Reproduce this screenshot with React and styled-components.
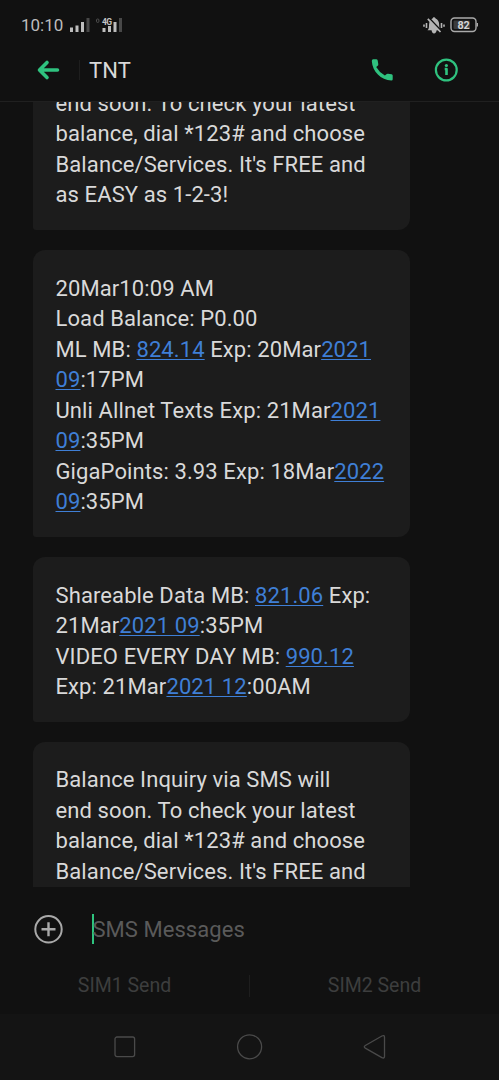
import React from "react";
import styled, { createGlobalStyle } from "styled-components";

const GlobalStyle = createGlobalStyle`
  * { box-sizing: border-box; }
  body { margin: 0; background: #111111; overflow: hidden; }
`;

const Screen = styled.main`
  display: flex;
  flex-direction: column;
  width: 499px;
  height: 1080px;
  overflow: hidden;
  background: #111111;
  color: #d9d9d9;
  font-family: Roboto, "Liberation Sans", sans-serif;
`;

const StatusBar = styled.div`
  display: flex;
  align-items: center;
  height: 50px;
  padding: 0 20px 0 21px;
`;

const Clock = styled.span`
  width: 49px;
  font-size: 17px;
  line-height: 20px;
  letter-spacing: 0;
  white-space: nowrap;
  color: #bdbdbd;
`;

const StatusRight = styled.div`
  display: flex;
  align-items: center;
  gap: 5px;
  margin-left: auto;
`;

const Icon = styled.svg`
  display: block;
  flex: none;
  overflow: visible;
`;

const Header = styled.header`
  display: flex;
  align-items: center;
  height: 52px;
  padding: 0 41px 11px 37px;
  border-bottom: 1px solid #202020;
`;

const Divider = styled.span`
  width: 1px;
  height: ${(p) => p.$height}px;
  margin-left: ${(p) => p.$gap || 0}px;
  background: #1e1e1e;
`;

const Title = styled.h1`
  flex: 1;
  margin: 2px 0 0 9px;
  font-size: 22px;
  font-weight: 400;
  line-height: 26px;
  letter-spacing: 0.1px;
`;

const HeaderActions = styled.div`
  display: flex;
  align-items: center;
  gap: 41px;
`;

const Thread = styled.section`
  height: 785px;
  overflow: hidden;
`;

const MessageList = styled.div`
  display: flex;
  flex-direction: column;
  gap: 20px;
  width: 377px;
  margin: -67.5px 0 0 33px;
`;

const Bubble = styled.article`
  flex: none;
  padding: 23.8px 22px 18.8px 22.5px;
  border-radius: 12px 12px 12px 3px;
  background: #1c1c1c;
  font-size: 22px;
  line-height: 30.55px;
  letter-spacing: 0.1px;
  white-space: nowrap;
`;

const Line = styled.div`
  height: 30.55px;
`;

const Link = styled.span`
  color: #3f7fd6;
  text-decoration: underline;
  text-decoration-thickness: 1.3px;
  text-underline-offset: 2px;
  text-decoration-skip-ink: none;
`;

const Composer = styled.div`
  display: flex;
  align-items: center;
  height: 85px;
  padding: 0 33px;
`;

const Caret = styled.span`
  width: 2.5px;
  height: 30px;
  margin: -1px -1.5px 0 27.5px;
  background: #2fc47f;
`;

const Placeholder = styled.span`
  padding-top: 1px;
  font-size: 22px;
  line-height: 30px;
  letter-spacing: 0.05px;
  color: #5a5a5a;
`;

const SendRow = styled.div`
  display: flex;
  align-items: center;
  height: 42px;
  padding-bottom: 15px;
`;

const SendButton = styled.span`
  flex: 1;
  font-size: 19.5px;
  line-height: 24px;
  text-align: center;
  color: #3d3e3e;
`;

const NavBar = styled.nav`
  display: grid;
  grid-template-columns: 1fr 1fr 1fr;
  justify-items: center;
  align-items: center;
  height: 66px;
  padding: 0 62px 0 62px;
  background: #141414;
`;

const GREEN = "#2fc27f";

function SignalIcons() {
  return (
    <Icon width="54" height="16" viewBox="0 0 54 16">
      <g fill="#bdbdbd">
        <rect x="0" y="10.5" width="3" height="4.5" />
        <rect x="5.5" y="8.500" width="3" height="6.500" />
        <rect x="11" y="5" width="3" height="10" />
        <rect x="32.5" y="11" width="3" height="4" />
        <rect x="38" y="9" width="3" height="6" />
        <rect x="43.5" y="5" width="3" height="10" />
      </g>
      <g fill="#484848">
        <rect x="16.5" y="1" width="3" height="14" />
        <rect x="49" y="1" width="3" height="14" />
      </g>
      <rect x="26.5" y="2" width="2.4" height="3.4" rx="1" fill="none" stroke="#505050" />
      <text x="32" y="7.5" fill="#c4c4c4" fontFamily="Roboto, sans-serif" fontSize="8.5" fontWeight="700" textLength="10">4G</text>
    </Icon>
  );
}

function MutedBell() {
  return (
    <Icon width="22" height="17" viewBox="0 0 22 17">
      <path d="M4.500 13.200C6 12 6 10 6 8c0-3.300 1.500-6 3.500-6.500C9.900.8 10.300.3 11 .3s1.200.5 1.600 1.200C15 2.200 16.200 5 16.200 8c0 2 .2 4 1.700 5.200z" fill="#b5b5b5" />
      <path d="M8.500 13h5.200c-.4 2.300-1.200 3.400-2.700 3.400S8.900 15.300 8.500 13z" fill="#b5b5b5" />
      <path d="M6.200 1 18.500 14" stroke="#111111" strokeWidth="1.500" />
      <path d="M4.800 1.800 17.500 15" stroke="#b5b5b5" strokeWidth="1.700" />
      <path d="M1 7.500v2.200M3.500 6v5M18.500 6v5M21 7.500v2.200" stroke="#b5b5b5" strokeWidth="1.600" />
    </Icon>
  );
}

function Battery() {
  return (
    <Icon width="29" height="16" viewBox="0 0 29 16">
      <rect x="1" y="1" width="25" height="13.500" rx="3.500" fill="none" stroke="#aaa" strokeWidth="1.400" />
      <rect x="3.500" y="3.500" width="16.500" height="8.500" rx="1" fill="#3b3b3b" />
      <path d="M27.300 6v3.500" stroke="#aaa" strokeWidth="1.400" />
      <text x="13.600" y="11.600" textAnchor="middle" fill="#d6d6d6" fontFamily="Roboto, sans-serif" fontSize="10.800" fontWeight="700">82</text>
    </Icon>
  );
}

const L = (text) => <Link>{text}</Link>;

const balanceInquiry = [
  "Balance Inquiry via SMS will",
  "end soon. To check your latest",
  "balance, dial *123# and choose",
  "Balance/Services. It's FREE and",
  "as EASY as 1-2-3!",
];

const messages = [
  balanceInquiry,
  [
    "20Mar10:09 AM",
    "Load Balance: P0.00",
    <>ML MB: {L("824.14")} Exp: 20Mar{L("2021")}</>,
    <>{L("09")}:17PM</>,
    <>Unli Allnet Texts Exp: 21Mar{L("2021")}</>,
    <>{L("09")}:35PM</>,
    <>GigaPoints: 3.93 Exp: 18Mar{L("2022")}</>,
    <>{L("09")}:35PM</>,
  ],
  [
    <>Shareable Data MB: {L("821.06")} Exp:</>,
    <>21Mar{L("2021 09")}:35PM</>,
    <>VIDEO EVERY DAY MB: {L("990.12")}</>,
    <>Exp: 21Mar{L("2021 12")}:00AM</>,
  ],
  balanceInquiry,
];

export default function App() {
  return (
    <Screen>
      <GlobalStyle />
      <StatusBar>
        <Clock>10:10</Clock>
        <SignalIcons />
        <StatusRight>
          <MutedBell />
          <Battery />
        </StatusRight>
      </StatusBar>
      <Header>
        <Icon width="23" height="20" viewBox="0 0 23 20">
          <path d="M10 2.500 2.500 10 10 17.500M3 10h17.500" fill="none" stroke={GREEN} strokeWidth="3.600" strokeLinecap="round" strokeLinejoin="round" />
        </Icon>
        <Divider $height={20} $gap={19} />
        <Title>TNT</Title>
        <HeaderActions>
          <Icon width="22" height="22" viewBox="0 0 22 22">
            <path fill={GREEN} d="M2.200 .3H5.200Q6.400.300 6.700 1.500L7.300 5.200Q7.400 6.200 6.700 6.800L5.200 8Q8.200 13.300 13.900 16.600L15.400 15.200Q16.100 14.500 17 14.700L20.600 15.200Q21.700 15.400 21.700 16.600V20.200Q21.700 21.500 20.400 21.500C10 21 1.300 12.500.8 2Q.8.300 2.200 .3z" />
          </Icon>
          <Icon width="24" height="24" viewBox="0 0 24 24">
            <circle cx="12.300" cy="12" r="10.400" fill="none" stroke={GREEN} strokeWidth="2.200" />
            <circle cx="12.400" cy="7.500" r="1.600" fill={GREEN} />
            <path d="M10.700 11H12.500V17" fill="none" stroke={GREEN} strokeWidth="2.600" strokeLinejoin="round" />
          </Icon>
        </HeaderActions>
      </Header>
      <Thread>
        <MessageList>
          {messages.map((lines, i) => (
            <Bubble key={i}>
              {lines.map((line, j) => (
                <Line key={j}>{line}</Line>
              ))}
            </Bubble>
          ))}
        </MessageList>
      </Thread>
      <Composer>
        <Icon width="31" height="31" viewBox="0 0 31 31">
          <circle cx="15.500" cy="15.300" r="13.200" fill="none" stroke="#a9a9a9" strokeWidth="2" />
          <path d="M15.500 8.300v14M8.500 15.300h14" stroke="#a9a9a9" strokeWidth="2.400" />
        </Icon>
        <Caret />
        <Placeholder>SMS Messages</Placeholder>
      </Composer>
      <SendRow>
        <SendButton>SIM1 Send</SendButton>
        <Divider $height={22} />
        <SendButton>SIM2 Send</SendButton>
      </SendRow>
      <NavBar>
        <Icon width="22" height="22" viewBox="0 0 22 22">
          <rect x="1" y="1" width="19.600" height="19.600" rx="2" fill="none" stroke="#4a4a4a" strokeWidth="1.300" />
        </Icon>
        <Icon width="26" height="26" viewBox="0 0 26 26">
          <circle cx="12.600" cy="12.800" r="12" fill="none" stroke="#4a4a4a" strokeWidth="1.300" />
        </Icon>
        <Icon width="22" height="24" viewBox="0 0 22 24">
          <path d="M1.300 10.500 17.900 1Q20.500 -.2 20.500 2.200V21.400Q20.500 23.800 17.900 22.600L1.300 13.100Q-.8 11.800 1.300 10.500z" fill="none" stroke="#4a4a4a" strokeWidth="1.300" />
        </Icon>
      </NavBar>
    </Screen>
  );
}
